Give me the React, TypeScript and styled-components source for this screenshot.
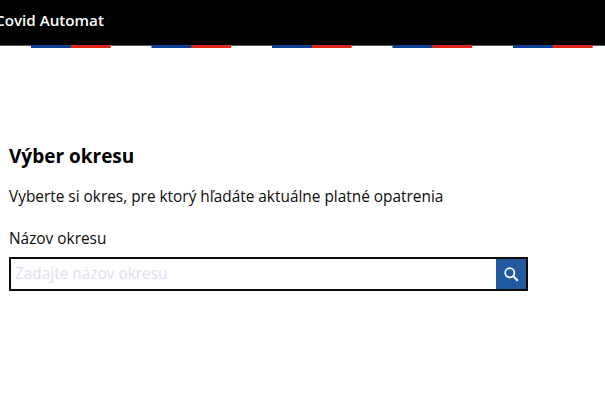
import React from 'react';
import styled, { createGlobalStyle } from 'styled-components';

const GlobalStyle = createGlobalStyle`
  html, body {
    margin: 0;
    padding: 0;
    background: #fff;
    overflow: hidden;
  }
  body {
    font-family: "Open Sans", "Noto Sans", "Liberation Sans", sans-serif;
    color: #0b0c0c;
  }
`;

const Header = styled.header`
  height: 45px;
  background: #000;
  display: flex;
  align-items: center;
  overflow: hidden;
`;

const Brand = styled.div`
  margin-left: -5px;
  color: #fff;
  font-size: 15.2px;
  font-weight: 600;
  white-space: nowrap;
  padding-bottom: 6px;
`;

const Stripe = styled.div`
  height: 3px;
  background-image: linear-gradient(
      to right,
      #0b3e96 0,
      #0b3e96 40px,
      #dd2418 40px,
      #dd2418 80px,
      transparent 80px,
      transparent 100%
    ),
    linear-gradient(#555, #555);
  background-size: 120.5px 3px, 100% 1px;
  background-position: 31px 0, 0 0;
  background-repeat: repeat-x, no-repeat;
`;

const Main = styled.main`
  padding: 95px 0 0 9px;
  width: 519px;
`;

const Title = styled.h1`
  margin: 0;
  font-size: 19px;
  line-height: 26px;
  font-weight: 700;
  color: #000;
`;

const Lead = styled.p`
  margin: 16px 0 0;
  font-size: 15.4px;
  line-height: 24px;
`;

const FieldLabel = styled.label`
  display: block;
  margin-top: 18px;
  font-size: 15.4px;
  line-height: 24px;
`;

const SearchBox = styled.div`
  display: flex;
  height: 34px;
  margin-top: 6px;
  box-sizing: border-box;
  border: 2px solid #0b0c0c;
`;

const SearchInput = styled.input`
  flex: 1;
  min-width: 0;
  border: 0;
  outline: 0;
  padding: 0 4px 1px;
  font: inherit;
  font-size: 15.4px;
  color: #0b0c0c;
  &::placeholder {
    color: #dfe0ee;
    opacity: 1;
  }
`;

const SearchButton = styled.button`
  width: 30px;
  border: 0;
  padding: 0;
  background: #23599e;
  display: flex;
  align-items: center;
  justify-content: center;
`;

const App: React.FC = () => {
  return (
    <>
      <GlobalStyle />
      <Header>
        <Brand>Covid Automat</Brand>
      </Header>
      <Stripe />
      <Main>
        <Title>Výber okresu</Title>
        <Lead>Vyberte si okres, pre ktorý hľadáte aktuálne platné opatrenia</Lead>
        <FieldLabel htmlFor="okres">Názov okresu</FieldLabel>
        <SearchBox>
          <SearchInput id="okres" placeholder="Zadajte názov okresu" />
          <SearchButton aria-label="Hľadať">
            <svg width="16" height="16" viewBox="0 0 16 16" fill="none" stroke="#fff">
              <circle cx="6.8" cy="6.8" r="4.6" strokeWidth="1.7" />
              <path d="M10.3 10.3L14.3 14.3" strokeWidth="2" strokeLinecap="round" />
            </svg>
          </SearchButton>
        </SearchBox>
      </Main>
    </>
  );
};

export default App;
